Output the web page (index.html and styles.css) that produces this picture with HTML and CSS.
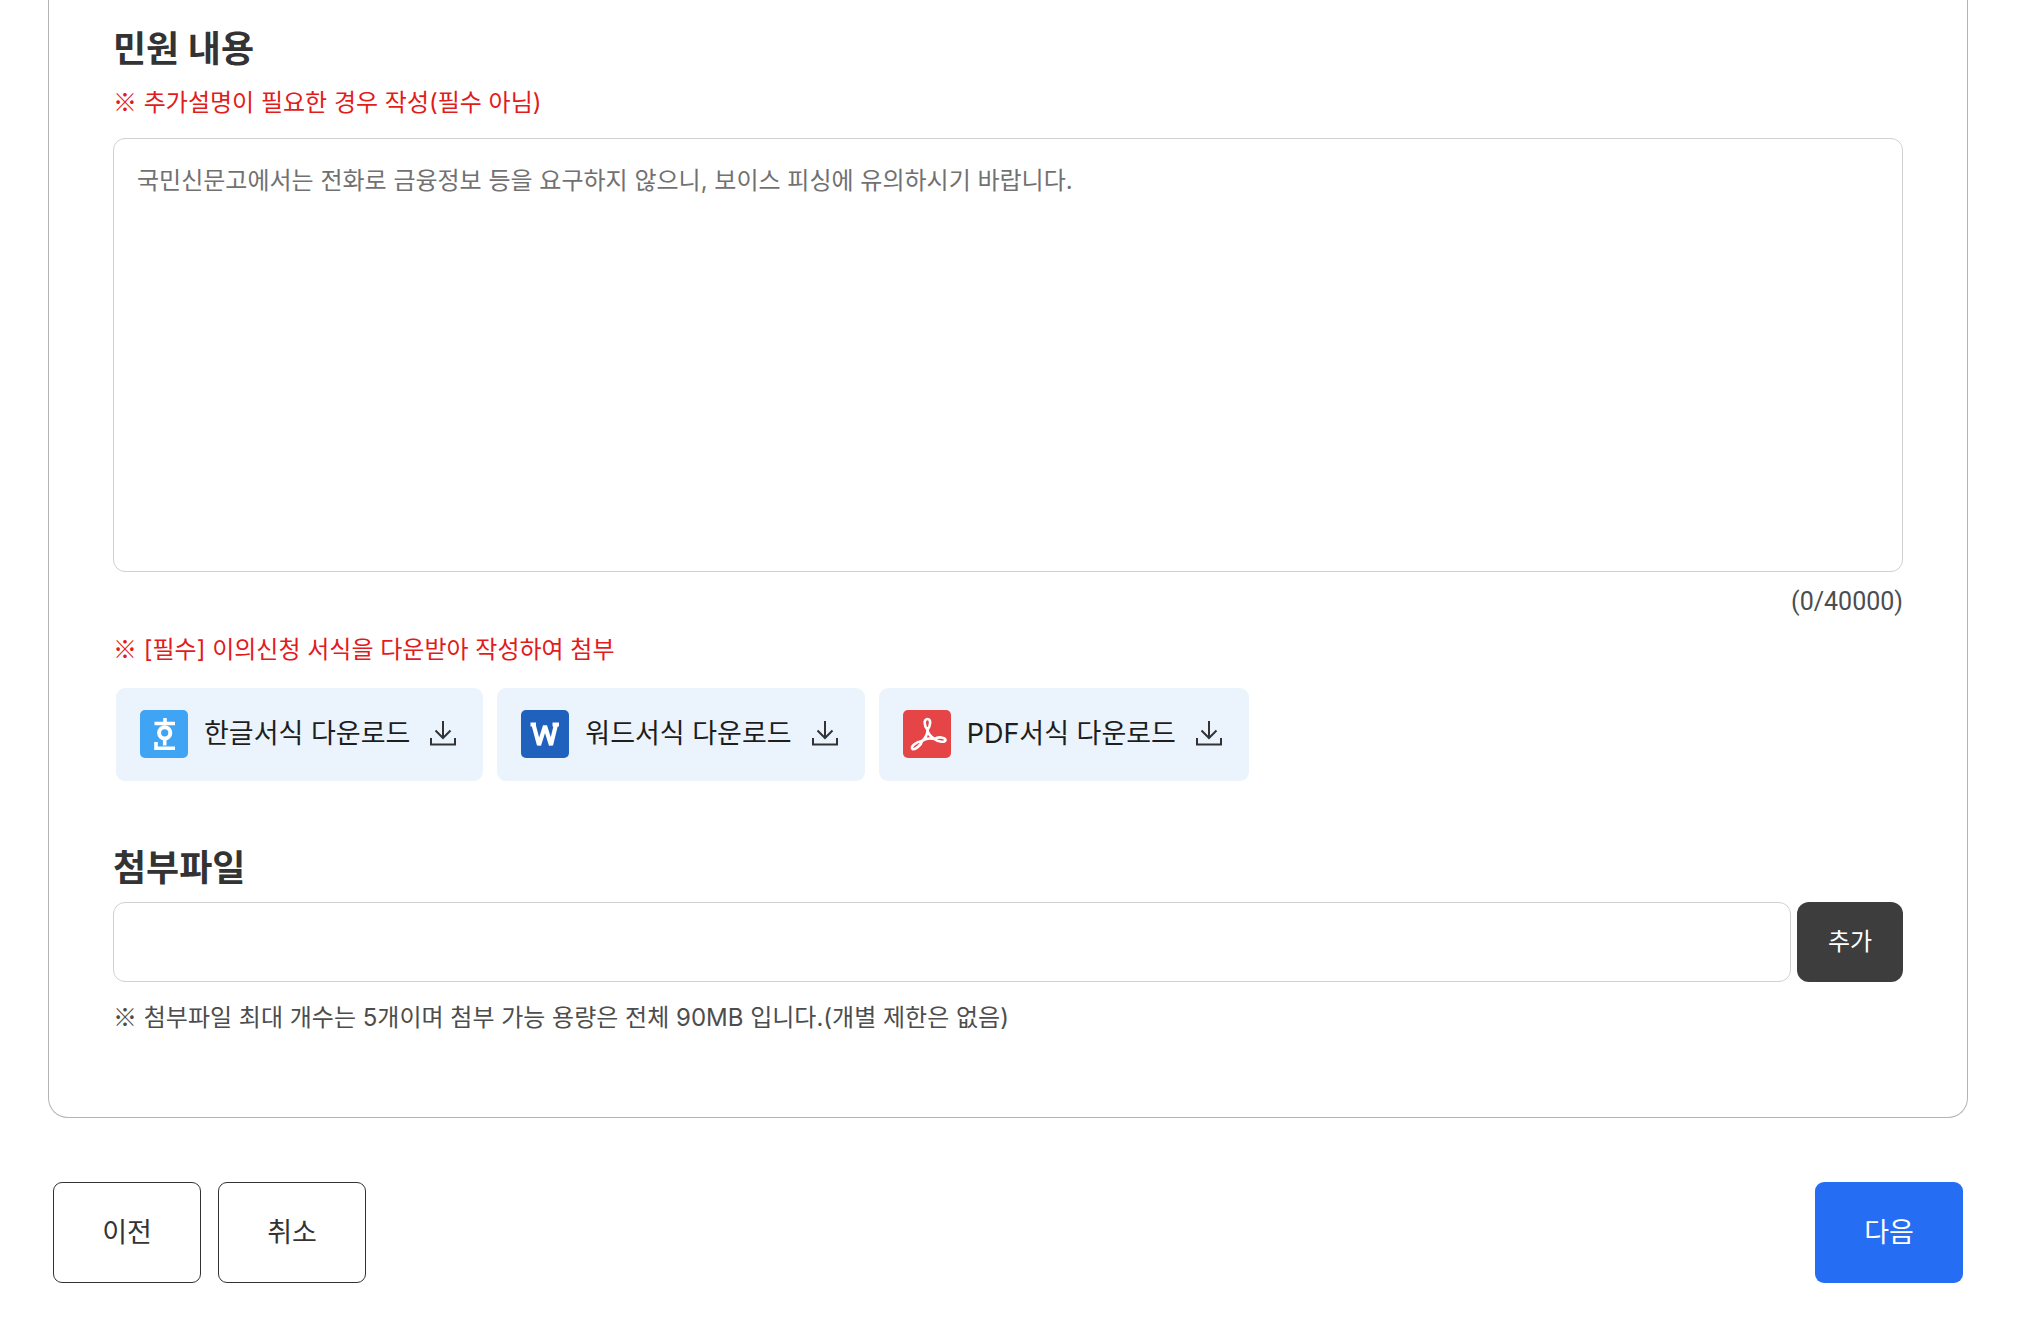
FILE: index.html
```html
<!DOCTYPE html>
<html lang="ko">
<head>
  <meta charset="UTF-8" />
  <meta name="viewport" content="width=device-width, initial-scale=1.0"/>
  <title>민원 신청</title>
  <link rel="stylesheet" href="styles.css">
</head>
<body>
  <form class="container">
    <div class="card">
      <h2><label for="content">민원 내용</label></h2>
      <p class="note red"><span class="mark">※</span> 추가설명이 필요한 경우 작성(필수 아님)</p>
      <textarea id="content" class="content" placeholder="국민신문고에서는 전화로 금융정보 등을 요구하지 않으니, 보이스 피싱에 유의하시기 바랍니다."></textarea>
      <p class="counter">(0/40000)</p>

      <!-- 서식 다운로드 -->
      <p class="note red"><span class="mark">※</span> [필수] 이의신청 서식을 다운받아 작성하여 첨부</p>
      <div class="downloads">
        <a class="download" href="#">
          <svg class="file-icon" viewBox="0 0 48 48" aria-hidden="true">
            <rect width="48" height="48" rx="5" fill="#3fa4f4"/>
            <g fill="none" stroke="#fff" stroke-width="3.6">
              <path d="M25 8v5M14.5 13.5H35"/>
              <circle cx="24.7" cy="22.8" r="5.6" stroke-width="4"/>
              <path d="M24.7 30v5.5"/>
              <path d="M16 32v6.2H35"/>
            </g>
          </svg>
          <span>한글서식 다운로드</span>
          <svg class="down-icon" viewBox="0 0 26 26" aria-hidden="true">
            <path d="M13 0v17M5.5 9.5l7.5 7.5 7.5-7.5M1 17v6.5h24V17"/>
          </svg>
        </a>
        <a class="download" href="#">
          <svg class="file-icon" viewBox="0 0 48 48" aria-hidden="true">
            <rect width="48" height="48" rx="5" fill="#1f61bd"/>
            <path d="M9.5 14.5H15M12.5 14.5L18 35L24 16L30 35L35 14.5M31.5 14.5H38" fill="none" stroke="#fff" stroke-width="4.2" stroke-linejoin="bevel"/>
          </svg>
          <span>워드서식 다운로드</span>
          <svg class="down-icon" viewBox="0 0 26 26" aria-hidden="true">
            <path d="M13 0v17M5.5 9.5l7.5 7.5 7.5-7.5M1 17v6.5h24V17"/>
          </svg>
        </a>
        <a class="download" href="#">
          <svg class="file-icon" viewBox="0 0 48 48" aria-hidden="true">
            <rect width="48" height="48" rx="5" fill="#e54547"/>
            <path d="M24.5 20C21 16 20.500 9 24.500 9C28.500 9 27.500 16 24.500 20C24.500 23 28 27 31.500 29C35 26.500 42 27 42.500 30C42.500 33 35 32 31.500 29C28 28 23 28.500 19 31C18.500 35 12 40 9.500 39C7 37 13 31.500 19 31C22 28.500 24.500 24 24.500 20Z" fill="none" stroke="#fff" stroke-width="2.6" stroke-linejoin="round"/>
          </svg>
          <span>PDF서식 다운로드</span>
          <svg class="down-icon" viewBox="0 0 26 26" aria-hidden="true">
            <path d="M13 0v17M5.5 9.5l7.5 7.5 7.5-7.5M1 17v6.5h24V17"/>
          </svg>
        </a>
      </div>

      <!-- 첨부파일 -->
      <h2 class="attach-title"><label for="file">첨부파일</label></h2>
      <div class="attach">
        <input type="text" id="file" readonly />
        <button type="button" class="add">추가</button>
      </div>
      <p class="note"><span class="mark">※</span> 첨부파일 최대 개수는 5개이며 첨부 가능 용량은 전체 90MB 입니다.(개별 제한은 없음)</p>
    </div>

    <div class="actions">
      <button type="button">이전</button>
      <button type="button">취소</button>
      <button type="submit" class="next">다음</button>
    </div>
  </form>
</body>
</html>
```
FILE: styles.css
```css
* {
  box-sizing: border-box;
}
body {
  background-color: #fff;
  color: #4d4d4d;
  font-family: Inter, "Noto Sans CJK KR", sans-serif;
  font-size: 24px;
  line-height: 36px;
  margin: 0;
}
.container {
  padding: 0 56px 54px 48px;
}
.card {
  border: 1px solid #b4b4b8;
  border-top: none;
  border-radius: 0 0 20px 20px;
  padding: 25px 64px 81px;
}
h2 {
  color: #333;
  font-size: 36px;
  font-weight: 700;
  line-height: 48px;
  margin: 0 0 12px;
}
p {
  margin: 0;
}
.red {
  color: #e21b1b;
}
.mark {
  font-family: "Noto Sans CJK KR", sans-serif;
  font-weight: 500;
  line-height: 1;
}
textarea,
input {
  display: block;
  background: #fff;
  border: 1px solid #d0d0d0;
  border-radius: 12px;
  color: #333;
  font: inherit;
}
.content {
  width: 100%;
  height: 434px;
  margin: 17px 0 12px;
  padding: 24px 23px;
  resize: none;
}
.content::placeholder {
  color: #717171;
}
.counter {
  font-family: Roboto, sans-serif;
  font-size: 25px;
  margin-bottom: 12px;
  text-align: right;
}
.downloads {
  display: flex;
  flex-wrap: wrap;
  gap: 14px;
  margin: 20px 3px 0;
}
.download {
  display: flex;
  align-items: center;
  background-color: #ebf4fc;
  border-radius: 9px;
  color: #1e1e1e;
  font-size: 27px;
  padding: 22px 27px 23px 24px;
  text-decoration: none;
}
.file-icon {
  width: 48px;
  height: 48px;
  margin-right: 16px;
}
.down-icon {
  width: 26px;
  height: 26px;
  margin-left: 20px;
  fill: none;
  stroke: #333;
  stroke-width: 2;
}
.attach-title {
  margin: 63px 0 10px;
}
.attach {
  display: flex;
  gap: 6px;
  margin-bottom: 18px;
}
.attach input {
  flex: 1;
  min-width: 0;
  height: 80px;
  padding: 0 24px;
}
button {
  background-color: #fff;
  border: 1px solid #333;
  border-radius: 9px;
  color: #333;
  cursor: pointer;
  font: inherit;
  font-size: 27px;
  width: 148px;
  height: 101px;
}
.add {
  background-color: #3d3d3d;
  border: none;
  border-radius: 12px;
  color: #fff;
  font-size: 24px;
  width: 106px;
  height: 80px;
}
.actions {
  display: flex;
  gap: 17px;
  padding: 64px 5px 0;
}
.next {
  background-color: #256ef4;
  border: none;
  color: #fff;
  margin-left: auto;
}
```
